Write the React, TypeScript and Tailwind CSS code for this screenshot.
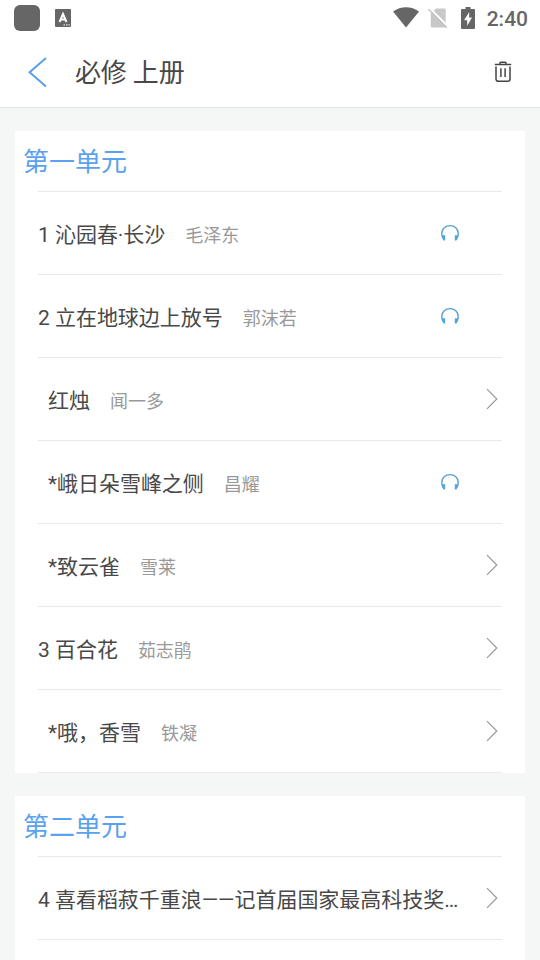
type Lesson = {
  title: string;
  author?: string;
  hasAudio?: boolean;
  indent?: boolean;
};

type Unit = {
  name: string;
  lessons: Lesson[];
};

const units: Unit[] = [
  {
    name: "第一单元",
    lessons: [
      { title: "1 沁园春·长沙", author: "毛泽东", hasAudio: true },
      { title: "2 立在地球边上放号", author: "郭沫若", hasAudio: true },
      { title: "红烛", author: "闻一多", indent: true },
      { title: "*峨日朵雪峰之侧", author: "昌耀", hasAudio: true, indent: true },
      { title: "*致云雀", author: "雪莱", indent: true },
      { title: "3 百合花", author: "茹志鹃" },
      { title: "*哦，香雪", author: "铁凝", indent: true },
    ],
  },
  {
    name: "第二单元",
    lessons: [{ title: "4 喜看稻菽千重浪——记首届国家最高科技奖…" }],
  },
];

const HeadphonesIcon = () => (
  <svg width="18" height="18" viewBox="0 0 18 18" fill="none">
    <path d="M1.600 13.500C.8 12 .8 10.800.8 9.200a8.200 7.600 0 0 1 16.400 0c0 1.600 0 2.800-.8 4.300" stroke="#5b9fd0" strokeWidth="1.400" />
    <path d="M1 11.200h3.200v5.300H2.600L1 14zM17 11.200h-3.200v5.300h1.600L17 14z" fill="#4fa5e0" />
  </svg>
);

const ChevronIcon = () => (
  <svg width="12" height="22" viewBox="0 0 12 22" fill="none">
    <path d="M1 1.2L10.8 11L1 20.8" stroke="#999999" strokeWidth="1.2" />
  </svg>
);

const StatusBar = () => (
  <div className="flex h-9 items-center justify-between pl-[14px] pr-3 text-[#666666]">
    <div className="flex items-center gap-[15px]">
      <div className="h-[26px] w-[26px] rounded-[6px] bg-[#666666]" />
      <svg width="16" height="18" viewBox="0 0 16 18">
        <rect width="16" height="18" rx="1" fill="#666666" />
        <path d="M4.500 13L8 5l3.500 8M5.600 10.600h4.800" fill="none" stroke="#fff" strokeWidth="2" />
        <path d="M8.500 15.800h1.500M11 15.800h1.500M13.400 15.800h1.400" stroke="#ddd" strokeWidth="1.200" />
      </svg>
    </div>
    <div className="flex items-center">
      <svg className="-mt-px" width="26" height="21" viewBox="0 0 26 21">
        <path d="M0 4.500C7.500-1.300 18.500-1.300 26 4.500L13 20.500z" fill="#666666" />
      </svg>
      <svg className="ml-[9px]" width="20" height="21" viewBox="0 0 20 21">
        <path d="M8 .5h8.500A1.200 1.200 0 0 1 17.700 1.700V18.300a1.200 1.200 0 0 1-1.200 1.200H4a1.200 1.200 0 0 1-1.200-1.200V5.500z" fill="#c8c8c8" />
        <path d="M1.500 0L20 18.800" stroke="#fff" strokeWidth="2.200" />
        <path d="M.5 1.200L18.800 19.800" stroke="#c0c0c0" strokeWidth="1.500" />
      </svg>
      <svg className="-mt-px ml-[13px]" width="14" height="22" viewBox="0 0 14 22">
        <path d="M4.500 0h5v2H13a1 1 0 0 1 1 1v18a1 1 0 0 1-1 1H1a1 1 0 0 1-1-1V3a1 1 0 0 1 1-1h3.500z" fill="#666666" />
        <path d="M8.300 5L3 13.300h3.200v5.400L11 10.600H8z" fill="#fff" />
      </svg>
      <span className="mt-0.5 ml-[12px] text-[21px] leading-none font-medium">2:40</span>
    </div>
  </div>
);

const Header = () => (
  <header className="flex h-[72px] items-center border-b border-[#e4e6e5] pr-7 pl-7">
    <svg width="20" height="32" viewBox="0 0 20 32" fill="none">
      <path d="M18 2L1.600 16.300L18 30.500" stroke="#5a9fe8" strokeWidth="2" />
    </svg>
    <h1 className="ml-[27px] flex-1 pt-[3px] text-[26px] leading-[38px] tracking-[-0.2px]">必修 上册</h1>
    <svg width="18" height="22" viewBox="0 0 18 22" fill="none" stroke="#444444" strokeWidth="1.500">
      <path d="M.8 3.500h16.400M6 3.500V2a.8.8 0 0 1 .8-.8h4.400A.8.8 0 0 1 12 2v1.500" />
      <path d="M2 5.500v12.500a2.300 2.300 0 0 0 2.300 2.300h9.400a2.300 2.300 0 0 0 2.300-2.300V5.500M6.900 7.300v8.700M11.100 7.300v8.700" />
    </svg>
  </header>
);

const LessonRow = ({ title, author, hasAudio, indent }: Lesson) => (
  <li className="flex h-[83px] items-center border-b border-[#e8eaea]">
    <div className={`flex flex-1 items-baseline pt-1 whitespace-nowrap ${indent ? "pl-[10px]" : ""}`}>
      <span className="text-[21px] leading-8 tracking-[-0.03px]">{title}</span>
      {author && <span className="ml-5 text-[18px] leading-6 text-[#999999]">{author}</span>}
    </div>
    <div className={hasAudio ? "mr-[43px]" : "mr-1"}>
      {hasAudio ? <HeadphonesIcon /> : <ChevronIcon />}
    </div>
  </li>
);

const UnitCard = ({ name, lessons }: Unit) => (
  <section className="shrink-0 bg-white px-[23px] last:grow">
    <h2 className="-ml-[15px] flex h-[60px] items-center pt-[3px] text-[26px] text-[#5aa2ef]">{name}</h2>
    <ul className="border-t border-[#e8eaea]">
      {lessons.map((lesson) => (
        <LessonRow key={lesson.title} {...lesson} />
      ))}
    </ul>
  </section>
);

export default function App() {
  return (
    <div className="flex h-[960px] w-[540px] flex-col overflow-hidden bg-[#f5f7f7] font-[Roboto,'Noto_Sans_CJK_SC',sans-serif] text-[#484848]">
      <div className="shrink-0 bg-white">
        <StatusBar />
        <Header />
      </div>
      <main className="flex min-h-0 flex-1 flex-col gap-[23px] px-[15px] pt-[23px]">
        {units.map((unit) => (
          <UnitCard key={unit.name} {...unit} />
        ))}
      </main>
    </div>
  );
}
